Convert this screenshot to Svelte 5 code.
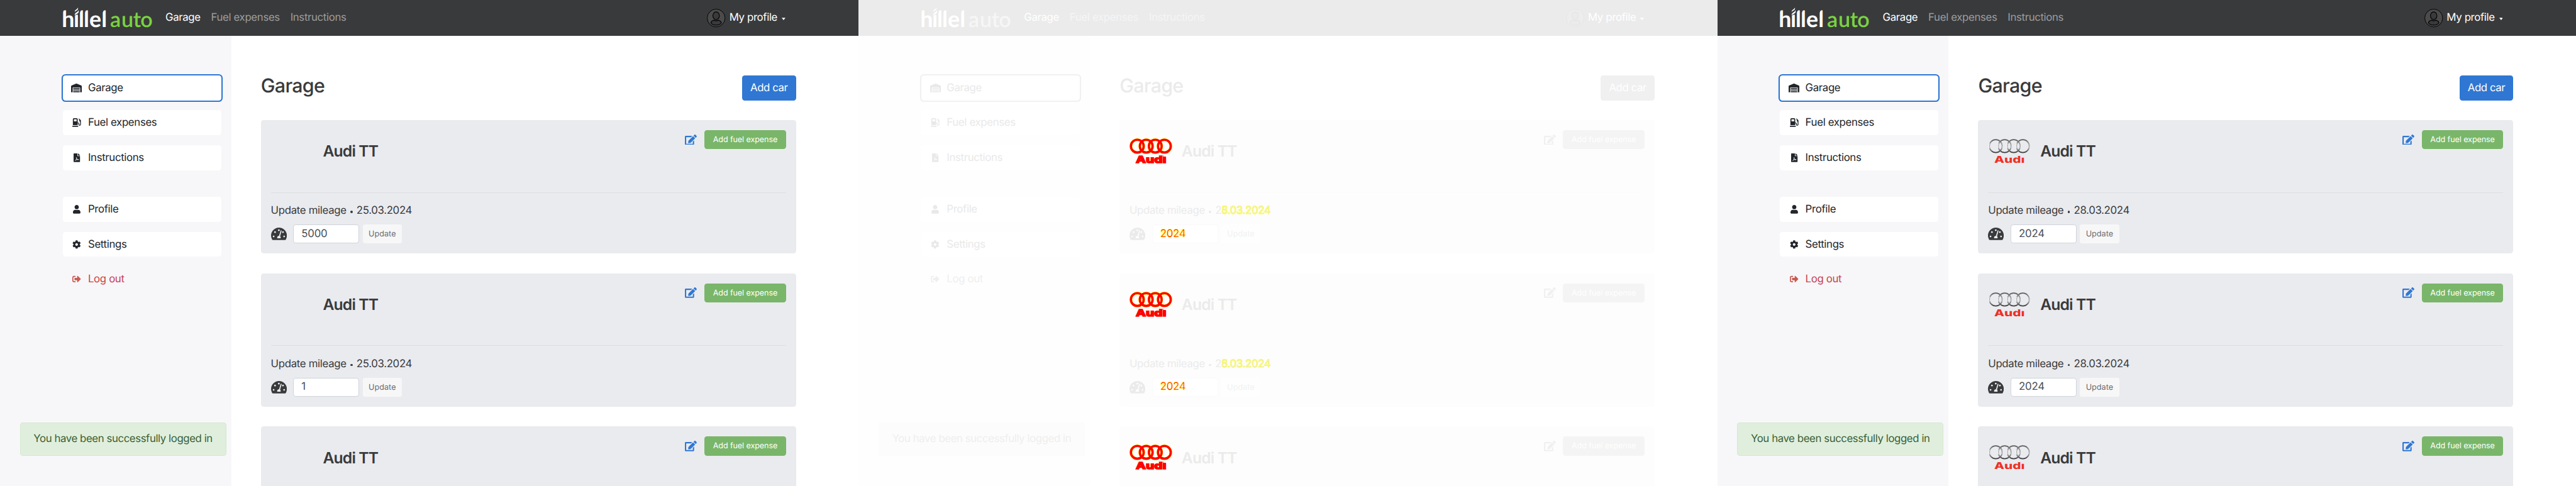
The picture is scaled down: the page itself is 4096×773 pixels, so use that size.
<script>
  const main = [
    { id: 'garage', label: 'Garage', active: true },
    { id: 'fuel', label: 'Fuel expenses' },
    { id: 'file', label: 'Instructions' }
  ];
  const account = [
    { id: 'user', label: 'Profile' },
    { id: 'cog', label: 'Settings' },
    { id: 'out', label: 'Log out', danger: true }
  ];

  const icons = {
    garage: { box: '0 0 640 512', d: 'M504 352H136.4c-4.4 0-8 3.6-8 8l-.1 48c0 4.4 3.6 8 8 8H504c4.4 0 8-3.6 8-8v-48c0-4.4-3.6-8-8-8zm0 96H136.1c-4.4 0-8 3.6-8 8l-.1 48c0 4.4 3.6 8 8 8h368c4.4 0 8-3.6 8-8v-48c0-4.4-3.6-8-8-8zm0-192H136.6c-4.4 0-8 3.6-8 8l-.1 48c0 4.4 3.6 8 8 8H504c4.4 0 8-3.6 8-8v-48c0-4.4-3.6-8-8-8zm106.5-139L338.4 3.7a48.15 48.15 0 0 0-36.9 0L29.5 117C11.7 124.5 0 141.9 0 161.3V504c0 4.4 3.6 8 8 8h80c4.4 0 8-3.6 8-8V256c0-17.6 14.6-32 32.6-32h382.8c18 0 32.6 14.4 32.6 32v248c0 4.4 3.6 8 8 8h80c4.4 0 8-3.6 8-8V161.3c0-19.4-11.7-36.8-29.5-44.3z' },
    fuel: { box: '0 0 512 512', d: 'M336 448H16c-8.8 0-16 7.2-16 16v32c0 8.8 7.2 16 16 16h320c8.8 0 16-7.2 16-16v-32c0-8.8-7.2-16-16-16zm157.2-340.7l-81-81c-6.2-6.2-16.4-6.2-22.6 0l-11.3 11.3c-6.2 6.2-6.2 16.4 0 22.6L416 97.9V160c0 28.1 20.9 51.3 48 55.2V376c0 13.2-10.8 24-24 24s-24-10.8-24-24v-32c0-48.6-39.4-88-88-88h-8V64c0-35.3-28.7-64-64-64H96C60.7 0 32 28.7 32 64v352h288V304h8c22.1 0 40 17.9 40 40v27.8c0 37.7 27 72 64.5 75.9 43 4.3 79.5-29.5 79.5-71.7V152.6c0-17-6.8-33.3-18.8-45.3zM256 192H96V64h160v128z' },
    file: { box: '0 0 384 512', d: 'M224 136V0H24C10.7 0 0 10.7 0 24v464c0 13.3 10.7 24 24 24h336c13.3 0 24-10.7 24-24V160H248c-13.2 0-24-10.8-24-24zM377 105L279.1 7c-4.5-4.5-10.6-7-17-7H256v128h128v-6.1c0-6.3-2.5-12.4-7-16.9z', line: 'M88 436c50-30 90-96 98-170 2-34-26-34-20 4 12 60 56 110 112 114 44 2 36-32-6-28-62 4-120 24-160 50' },
    user: { box: '0 0 448 512', d: 'M224 256c70.7 0 128-57.3 128-128S294.7 0 224 0 96 57.3 96 128s57.3 128 128 128zm89.6 32h-16.7c-22.2 10.2-46.9 16-72.9 16s-50.6-5.8-72.9-16h-16.7C60.2 288 0 348.2 0 422.4V464c0 26.5 21.5 48 48 48h352c26.5 0 48-21.5 48-48v-41.6c0-74.2-60.2-134.4-134.4-134.4z' },
    cog: { box: '0 0 512 512', d: 'M487.4 315.7l-42.6-24.6c4.3-23.2 4.3-47 0-70.2l42.6-24.6c4.9-2.8 7.1-8.6 5.5-14-11.1-35.6-30-67.8-54.7-94.6-3.8-4.1-10-5.1-14.8-2.3L380.8 110c-17.9-15.4-38.5-27.3-60.8-35.1V25.8c0-5.6-3.9-10.5-9.4-11.7-36.7-8.2-74.3-7.8-109.2 0-5.5 1.2-9.4 6.1-9.4 11.7V75c-22.2 7.9-42.8 19.8-60.8 35.1L88.7 85.5c-4.9-2.8-11-1.9-14.8 2.3-24.7 26.7-43.6 58.9-54.7 94.6-1.7 5.4.6 11.2 5.5 14L67.3 221c-4.3 23.2-4.3 47 0 70.2l-42.6 24.6c-4.9 2.8-7.1 8.6-5.5 14 11.1 35.6 30 67.8 54.7 94.6 3.8 4.1 10 5.1 14.8 2.3l42.6-24.6c17.9 15.4 38.5 27.3 60.8 35.1v49.2c0 5.6 3.9 10.5 9.4 11.7 36.7 8.2 74.3 7.8 109.2 0 5.5-1.2 9.4-6.1 9.4-11.7v-49.2c22.2-7.9 42.8-19.8 60.8-35.1l42.6 24.6c4.9 2.8 11 1.9 14.8-2.3 24.7-26.7 43.6-58.9 54.7-94.6 1.5-5.5-.7-11.3-5.6-14.1zM256 336c-44.1 0-80-35.9-80-80s35.9-80 80-80 80 35.9 80 80-35.9 80-80 80z' },
    out: { box: '0 0 512 512', d: 'M497 273L329 441c-15 15-41 4.5-41-17v-96H152c-13.3 0-24-10.7-24-24v-96c0-13.3 10.7-24 24-24h136V88c0-21.4 25.9-32 41-17l168 168c9.3 9.4 9.3 24.6 0 34zM192 436v-40c0-6.6-5.4-12-12-12H96c-17.7 0-32-14.3-32-32V160c0-17.7 14.3-32 32-32h84c6.6 0 12-5.4 12-12V76c0-6.6-5.4-12-12-12H96c-53 0-96 43-96 96v192c0 53 43 96 96 96h84c6.6 0 12-5.4 12-12z' }
  };

  const panels = [
    {
      kind: 'before',
      cars: [{ date: '25.03.2024', mileage: '5000' }, { date: '25.03.2024', mileage: '1' }, {}]
    },
    {
      kind: 'diff',
      cars: [
        { date: ['5.03.2024', '8.03.2024'], mileage: ['5000', '2024'] },
        { date: ['5.03.2024', '8.03.2024'], mileage: ['1', '2024'] },
        {}
      ]
    },
    {
      kind: 'after',
      cars: [{ date: '28.03.2024', mileage: '2024' }, { date: '28.03.2024', mileage: '2024' }, {}]
    }
  ];

  const rings = [421.8, 435.3, 449, 462.8];
</script>

{#snippet logo()}
  <svg class="logo" viewBox="95 10 136 34">
    <text class="brand" y="40" x="93.4 111.1 118.75 126.35 134.9 153.35">hillel</text>
    <text class="brand accent" y="40" x="166.4 183.5 201.3 212.4">auto</text>
    <g class="notch">
      <rect x="112.4" y="13.4" width="6.6" height="8" />
      <path d="M94 13h4.9v1.1q-3.4 1-3.9 4h-1z" />
      <path d="M120 13h5.2v1.1q-3.6 1-4.1 4h-1.1z" />
      <path d="M127.6 13h5.2v1.1q-3.6 1-4.1 4h-1.1z" />
      <path d="M154.6 13h5.2v1.1q-3.6 1-4.1 4h-1.1z" />
    </g>
    <g class="flame">
      <path d="M113 17.3c0-3.4 4.2-3 4.8-6.5.8 3.9-1.3 4.3-4.8 6.5z" />
      <path d="M112.9 22.6c-.2-4.8 5.4-3.8 5.8-8.1 1.6 5.4-2.2 5.4-5.8 8.1z" />
      <path d="M113.6 24v-1q1-.8 3.9-1.5V24z" />
    </g>
  </svg>
{/snippet}

{#snippet sideLink(item)}
  <a class="side-link" class:active={item.active} class:danger={item.danger}>
    <span class="side-icon">
      <svg viewBox={icons[item.id].box}>
        <path d={icons[item.id].d} />
        {#if icons[item.id].line}<path class="line" d={icons[item.id].line} />{/if}
      </svg>
    </span>
    <span class="side-label">{item.label}</span>
  </a>
{/snippet}

{#snippet carLogo(kind)}
  {#if kind === 'after'}
    <svg class="car-logo" viewBox="410 197 64 64">
      <defs>
        <linearGradient id="chrome" x1="0" y1="0" x2="0" y2="1">
          <stop offset="0" stop-color="#5c5c5c" />
          <stop offset=".3" stop-color="#9a9b9c" />
          <stop offset=".6" stop-color="#b4b5b6" />
          <stop offset="1" stop-color="#3c3c3c" />
        </linearGradient>
      </defs>
      {#each rings as cx}
        <circle {cx} cy="221.2" r="9.7" fill="none" stroke="url(#chrome)" stroke-width="1.7" />
        <path d="M{cx - 10} 224.5a10.2 10.2 0 0 1 .4-7.5" fill="none" stroke="#f8f8f8" stroke-width="1" />
      {/each}
      <text class="make" x="419.6" y="246.5" textLength="46" lengthAdjust="spacingAndGlyphs">Audi</text>
      <rect class="dot-cover" x="460.6" y="234" width="6" height="4" />
    </svg>
  {:else if kind === 'diff'}
    <svg class="car-logo" viewBox="410 197 64 64">
      {#each rings as cx}
        <circle {cx} cy="221.2" r="9.7" fill="none" stroke="#ff0" stroke-width="4.2" />
      {/each}
      {#each rings as cx}
        <circle {cx} cy="221.2" r="9.7" fill="none" stroke="#f00" stroke-width="3.4" />
      {/each}
      <text class="make halo" x="419.6" y="246.5" textLength="46" lengthAdjust="spacingAndGlyphs">Audi</text>
      <rect class="dot-cover" x="461" y="233" width="6" height="4" />
    </svg>
  {:else}
    <span class="car-logo"></span>
  {/if}
{/snippet}

{#snippet changed(pair)}
  <span class="stack"><span class="was">{pair[0]}</span><span class="now">{pair[1]}</span></span>
{/snippet}

<div class="board">
  {#each panels as panel}
    <section class="panel {panel.kind}">
      <header>
        {@render logo()}
        <nav class="top-nav">
          <a class="current">Garage</a>
          <a>Fuel expenses</a>
          <a>Instructions</a>
        </nav>
        <div class="profile">
          <svg class="avatar" viewBox="0 0 28 28">
            <circle cx="14" cy="14" r="13.5" />
            <ellipse class="hole" cx="14" cy="10.5" rx="4.9" ry="5.8" />
            <path class="hole" d="M11 17.3q3 1.7 6 0c2.4.6 4.600 2.200 5 3.900-1.500 2.400-4.500 3.500-8 3.500s-6.500-1.100-8-3.500c.4-1.700 2.600-3.300 5-3.900z" />
          </svg>
          <span>My profile</span>
          <svg class="caret" viewBox="0 0 6 4"><path d="M0 0h6L3 4z" /></svg>
        </div>
      </header>

      <div class="body">
        <aside>
          <div class="group">
            {#each main as item}{@render sideLink(item)}{/each}
          </div>
          <div class="group">
            {#each account as item}{@render sideLink(item)}{/each}
          </div>
        </aside>

        <main>
          <div class="title-row">
            <h1>Garage</h1>
            <button class="add">Add car</button>
          </div>
          <div class="cards">
            {#each panel.cars as car}
              <article>
                <div class="car-top">
                  {@render carLogo(panel.kind)}
                  <h2>Audi TT</h2>
                  <div class="actions">
                    <svg class="edit" viewBox="0 0 576 512"><path d="M402.6 83.2l90.2 90.2c3.8 3.8 3.8 10 0 13.8L274.4 405.6l-92.8 10.3c-12.4 1.4-22.9-9.1-21.5-21.5l10.3-92.8L388.8 83.2c3.8-3.8 10-3.8 13.8 0zm162-22.9l-48.8-48.8c-15.2-15.2-39.9-15.2-55.2 0l-35.4 35.4c-3.8 3.8-3.8 10 0 13.8l90.2 90.2c3.8 3.8 10 3.8 13.8 0l35.4-35.4c15.2-15.3 15.2-40 0-55.2zM384 346.2V448H64V128h229.8c3.2 0 6.2-1.3 8.5-3.5l40-40c7.6-7.6 2.2-20.5-8.5-20.5H48C21.5 64 0 85.5 0 112v352c0 26.5 21.5 48 48 48h352c26.5 0 48-21.5 48-48V306.2c0-10.7-12.9-16-20.5-8.5l-40 40c-2.2 2.3-3.5 5.3-3.5 8.5z" /></svg>
                    <button class="expense">Add fuel expense</button>
                  </div>
                </div>
                {#if car.date}
                  <div class="car-bottom">
                    <p>
                      Update mileage<span class="bullet"></span>{#if panel.kind === 'diff'}2{@render changed(car.date)}{:else}{car.date}{/if}
                    </p>
                    <div class="mileage">
                      <svg class="gauge" viewBox="0 0 24 18.7">
                        <path d="M12 0C5.4 0 0 5.4 0 12c0 2.2.6 4.2 1.6 6 .2.4.7.7 1.1.7h18.6c.4 0 .9-.3 1.1-.7 1-1.8 1.6-3.8 1.6-6C24 5.4 18.6 0 12 0z" />
                        <g class="cut">
                          <circle cx="11.8" cy="4" r="1.3" />
                          <circle cx="6" cy="6.8" r="1.3" />
                          <circle cx="18" cy="6.8" r="1.3" />
                          <circle cx="3.9" cy="13.4" r="1.3" />
                          <circle cx="19.8" cy="13.4" r="1.3" />
                          <path d="M14.6 4.3q.9-.6 1.4.4l-2.3 8.4q1 .8.9 2.3 0 .9-.9.9h-3.6q-.9 0-.9-.9 0-2.400 2.900-2.900z" />
                        </g>
                      </svg>
                      <div class="field">
                        {#if panel.kind === 'diff'}{@render changed(car.mileage)}{:else}{car.mileage}{/if}
                      </div>
                      <button class="update">Update</button>
                    </div>
                  </div>
                {/if}
              </article>
            {/each}
          </div>
        </main>
      </div>

      <div class="alert">You have been successfully logged in</div>
    </section>
  {/each}
</div>

<style>
  :global(html) { font-size: 10.50256px; }
  :global(body) { margin: 0; background: #fff; overflow: hidden; }

  .board {
    display: grid;
    grid-template-columns: repeat(3, 130rem);
    width: 390rem;
    height: 773px;
    overflow: hidden;
    font: 400 1.6rem/2.4rem Inter, sans-serif;
    letter-spacing: -0.021em;
    text-rendering: geometricPrecision;
  }

  .panel {
    --bar: #393a3c;
    --bar-muted: #9c9d9e;
    --green: #7ad33f;
    --side: #f7f7f9;
    --link-bg: #fff;
    --ink: #22262b;
    --text: #393a3c;
    --blue: #2f77d3;
    --danger: #c9424b;
    --danger-icon: #c95a52;
    --card: #eaebef;
    --rule: #dcdee2;
    --expense: #79b669;
    --field-border: #ced4da;
    --field-text: #495057;
    --update-bg: #f7f7f8;
    --update-text: #6b6c70;
    --alert-bg: #e0efdd;
    --alert-border: #d3e8cf;
    --alert-text: #3b5f35;
    --avatar: #4b4b4b;
    --avatar-line: #000;
    position: relative;
    display: flex;
    flex-direction: column;
    height: 773px;
    overflow: hidden;
    background: #fff;
    color: var(--text);
  }
  .panel.diff {
    --bar: #ebebeb;
    --bar-muted: #f5f5f5;
    --green: #f6f6f6;
    --side: #fefefe;
    --ink: #e9e9e9;
    --text: #ebebeb;
    --blue: #f0f0f0;
    --danger: #efefef;
    --danger-icon: #efefef;
    --card: #fdfdfd;
    --rule: #fbfbfb;
    --expense: #f4f4f4;
    --field-border: #fafafa;
    --field-text: #ededed;
    --update-bg: #fefefe;
    --update-text: #f2f2f2;
    --alert-bg: #fcfcfc;
    --alert-border: #fbfbfb;
    --alert-text: #efefef;
    --avatar: #ededed;
    --avatar-line: #e5e5e5;
  }

  header {
    display: flex;
    align-items: center;
    flex: none;
    height: 5.4rem;
    box-sizing: border-box;
    padding: 0 11.1rem 0 9.5rem;
    background: var(--bar);
    color: #fff;
  }
  .logo { width: 13.6rem; height: 3.4rem; flex: none; overflow: visible; }
  .brand { font: 700 34px Lato, sans-serif; letter-spacing: 0; fill: #fff; }
  .accent { font-size: 32.5px; font-weight: 600; fill: var(--green); }
  .notch { fill: var(--bar); }
  .flame { fill: #fff; }
  .top-nav { display: flex; gap: 1.6rem; margin-left: 1.94rem; padding-top: .1rem; color: var(--bar-muted); }
  .current { color: #fff; }
  .profile { display: flex; align-items: center; margin-left: auto; }
  .avatar { width: 2.8rem; height: 2.8rem; margin-right: .55rem; margin-top: .1rem; fill: var(--avatar); stroke: var(--avatar-line); stroke-width: .9; }
  .hole { fill: var(--bar); stroke-width: 1.1; }
  .caret { width: .56rem; height: .4rem; margin-left: .65rem; margin-top: .3rem; fill: #fff; }

  .body { display: flex; flex: 1; min-height: 0; }
  aside {
    display: flex;
    flex-direction: column;
    gap: 4rem;
    flex: none;
    width: 35rem;
    box-sizing: border-box;
    padding: 6rem 1.5rem 0 9.5rem;
    background: var(--side);
  }
  .group { display: flex; flex-direction: column; gap: 1.5rem; }
  .side-link {
    display: flex;
    align-items: center;
    height: 3.8rem;
    box-sizing: border-box;
    padding-left: 1.3rem;
    border-radius: .4rem;
    background: var(--link-bg);
    color: var(--ink);
  }
  .side-link.active { box-shadow: 0 0 0 .2rem var(--blue); }
  .side-link.danger { background: none; color: var(--danger); }
  .side-icon { display: flex; justify-content: center; width: 1.63rem; margin-right: .9rem; }
  .side-icon svg { height: 1.3rem; fill: currentColor; overflow: visible; }
  .side-label { padding-top: .12rem; }
  .danger .side-icon { color: var(--danger-icon); }
  .line { fill: none; stroke: var(--link-bg); stroke-width: 30; }

  main { flex: 1; min-width: 0; padding: 6rem 9.5rem 0 4.5rem; }
  .title-row { display: flex; justify-content: space-between; align-items: center; height: 3.8rem; margin-bottom: 3rem; }
  h1 { margin: 0; padding-bottom: .35rem; font-size: 2.9rem; line-height: 3.4rem; font-weight: 500; letter-spacing: -0.024em; }
  button { border: 0; padding: .1rem 0 0; font: inherit; letter-spacing: inherit; text-rendering: inherit; }
  .add { width: 8.15rem; height: 3.8rem; border-radius: .4rem; background: var(--blue); color: #fff; letter-spacing: -0.026em; }

  .cards { display: flex; flex-direction: column; gap: 3rem; }
  article { flex: none; height: 20.2rem; box-sizing: border-box; padding: 1.5rem; border-radius: .4rem; background: var(--card); }
  .car-top { display: flex; align-items: center; height: 9.5rem; padding-bottom: 3rem; box-sizing: border-box; border-bottom: 1px solid var(--rule); }
  .car-logo { width: 6.4rem; height: 6.4rem; flex: none; overflow: visible; }
  .make { font: 800 14.5px Inter, sans-serif; letter-spacing: 0; fill: #ed3124; }
  .make.halo { fill: #f00; stroke: #f00; stroke-width: 1.3; }
  .dot-cover { fill: var(--card); }
  h2 { margin: 0 0 0 1.5rem; padding-top: .12rem; font-size: 2.35rem; line-height: 3rem; font-weight: 600; letter-spacing: -0.035em; }
  .actions { display: flex; align-items: center; align-self: flex-start; gap: 1.12rem; margin-left: auto; }
  .edit { width: 1.8rem; height: 1.6rem; fill: var(--blue); }
  .expense { width: 12.35rem; height: 2.9rem; border-radius: .4rem; background: var(--expense); color: #fff; font-size: 1.2rem; letter-spacing: -0.008em; }

  .car-bottom { padding-top: 1.58rem; }
  p { display: flex; align-items: center; margin: 0 0 .82rem; height: 2.4rem; letter-spacing: -0.0195em; }
  .bullet { width: .36rem; height: .36rem; margin: .2rem .58rem 0 .6rem; border-radius: 50%; background: currentColor; }
  .mileage { display: flex; align-items: center; height: 2.9rem; }
  .gauge { width: 2.4rem; height: 1.87rem; margin-right: 1rem; fill: var(--text); }
  .cut { fill: var(--card); }
  .field {
    display: flex;
    align-items: center;
    width: 10rem;
    height: 2.9rem;
    box-sizing: border-box;
    margin-right: .5rem;
    padding-left: 1.15rem;
    border: 1px solid var(--field-border);
    border-radius: .4rem;
    background: #fff;
    color: var(--field-text);
    letter-spacing: -0.013em;
  }
  .update { width: 5.95rem; height: 2.9rem; border-radius: .3rem; background: var(--update-bg); color: var(--update-text); font-size: 1.2rem; letter-spacing: .005em; }

  .stack { display: inline-grid; -webkit-text-stroke: .045rem #ff0; }
  .stack > span { grid-area: 1 / 1; }
  .field .was { color: #fff; }
  .field .now { color: #f00; }

  .alert {
    position: absolute;
    left: 3rem;
    top: 64rem;
    display: flex;
    align-items: center;
    justify-content: center;
    width: 31.25rem;
    height: 5rem;
    box-sizing: border-box;
    padding-top: .1rem;
    border: 1px solid var(--alert-border);
    border-radius: .4rem;
    background: var(--alert-bg);
    color: var(--alert-text);
    letter-spacing: -0.025em;
    white-space: nowrap;
  }
</style>
